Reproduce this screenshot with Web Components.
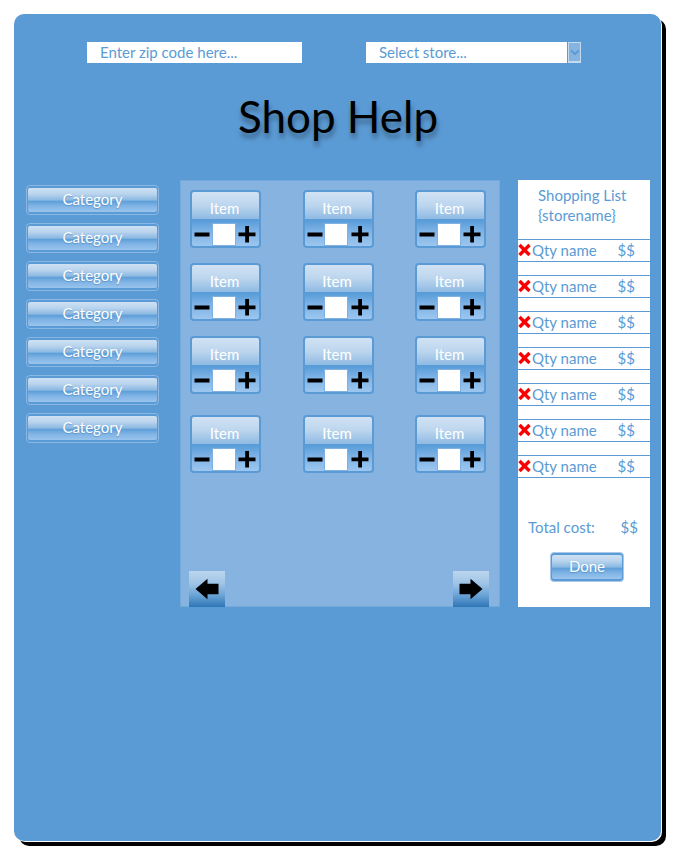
<!DOCTYPE html>
<html lang="en">
<head>
<meta charset="utf-8">
<meta name="viewport" content="width=device-width, initial-scale=1">
<title>Shop Help</title>
<style>
  html { --blue: #5b9bd5; --panel: #86b3e0; --gap: 18px; }
  body { margin: 0; background: #fff; font: 15px/20px Lato, "Open Sans", sans-serif; color: var(--blue); }
</style>
</head>
<body>
<shop-app></shop-app>
<script>
const define = (name, html, init) => {
  const template = document.createElement('template');
  template.innerHTML = `<style>
    *, *::before, *::after { box-sizing: border-box; }
    :host { display: block; box-sizing: border-box; }
    button, input, select { font: inherit; color: inherit; margin: 0; padding: 0; border: 0; border-radius: 0; }
    button { cursor: pointer; }
    svg { display: block; }
  </style>${html}`;
  customElements.define(name, class extends HTMLElement {
    constructor() {
      super();
      this.attachShadow({ mode: 'open' }).append(document.importNode(template.content, true));
      if (init) init(this.shadowRoot);
    }
  });
};

define('glossy-button', `<style>
  button {
    display: block; width: 100%; height: 30px; padding: 2px 1px; border-radius: 4px;
    border: 1px solid #8ab7e3; background: var(--blue); color: #fff; line-height: 22px;
  }
  span {
    display: block; height: 24px; border-radius: 2px;
    text-shadow: 0 1px 1px #5b95cc;
    background: linear-gradient(#cfe1f3, #b9d4ed 25%, #8cb9e2 50%, #5f9fda 56%, #80b4e5 75%, #9ac4ee);
  }
  :host([soft]) button { border-color: #a9caea; }
</style><button type="button"><span><slot></slot></span></button>`);

define('zip-field', `<style>
  input { display: block; width: 100%; height: 21px; padding: 0 13px 2px; background: #fff; outline-offset: 1px; }
  input::placeholder { color: var(--blue); opacity: 1; }
</style><input type="text" aria-label="Zip code" placeholder="Enter zip code here...">`);

define('store-select', `<style>
  :host { display: grid; }
  select, .arrow { grid-area: 1 / 1; }
  select { appearance: none; width: 100%; height: 21px; padding: 0 26px 2px 13px; background: #fff; }
  .arrow {
    justify-self: end; pointer-events: none; width: 13px; height: 21px;
    border: solid #c3daf1; border-width: 1px 1px 2px 1px; background: var(--panel);
    box-shadow: -1px 0 var(--blue); display: grid; place-items: center;
  }
</style>
<select aria-label="Store"><option>Select store...</option></select>
<span class="arrow"><svg width="10" height="7" viewBox="0 0 10 7"><path d="M1 1.5 5 5 9 1.5" fill="none" stroke="#5b9bd5" stroke-width="2"/></svg></span>`);

define('shop-item', `<style>
  :host {
    width: 71px; height: 58px; border: 2px solid var(--blue); border-radius: 4px; color: #fff; text-align: center;
    background: linear-gradient(#d1e2f3, #bdd6ee 24%, #8fbae3 50%, #559ad8 51%, #7db2e5 72%, #9cc6ef);
  }
  .name { padding: 6px 2px 0 0; height: 30px; }
  .row { display: flex; align-items: center; justify-content: space-between; padding: 0 2px; height: 24px; }
  button { background: none; }
  input { width: 24px; height: 23px; background: #fff; border: 1px solid #7fb1e2; color: var(--blue); text-align: center; }
</style>
<div class="name"><slot>Item</slot></div>
<div class="row">
  <button type="button" aria-label="Remove one"><svg width="16" height="18" viewBox="0 0 16 18"><path d="M.5 7.5h15v4H.5z"/></svg></button>
  <input type="text" inputmode="numeric" aria-label="Quantity">
  <button type="button" aria-label="Add one"><svg width="20" height="18" viewBox="0 0 20 18"><path d="M8.2 1H12v6.5h6.5v3.7H12v6.3H8.2v-6.3H1.5V7.5h6.7z"/></svg></button>
</div>`);

define('page-button', `<style>
  button { display: grid; place-items: center; width: 36px; height: 36px; background: linear-gradient(#bdd6ee, #9fc4e6 35%, #6fa6d8 65%, #2e75b6); }
  :host([next]) svg { transform: scaleX(-1); }
</style><button type="button"><svg width="24" height="22" viewBox="0 0 24 22" aria-hidden="true"><path d="M.5 11 12.5.8v5h11v10.4h-11v5z"/></svg></button>`);

define('item-panel', `<style>
  :host { display: flex; flex-direction: column; justify-content: space-between; background: var(--panel); border: 1px solid #74a9dc; padding: 9px 10px 0 9px; }
  .items { display: grid; grid-template-columns: repeat(3, auto); grid-template-rows: repeat(3, 58px) 64px; row-gap: 15px; justify-content: space-between; align-items: end; padding-right: 3px; }
  .pages { display: flex; justify-content: space-between; margin: 0 0 -1px -1px; }
</style><div class="items"></div>
<nav class="pages" aria-label="Pages"><page-button></page-button><page-button next></page-button></nav>`,
  root => {
    root.querySelector('.items').innerHTML = '<shop-item>Item</shop-item>'.repeat(12);
    root.querySelectorAll('page-button').forEach((b, i) =>
      b.shadowRoot.querySelector('button').setAttribute('aria-label', i ? 'Next page' : 'Previous page'));
  });

define('list-row', `<style>
  :host { display: flex; align-items: center; height: 23px; border: solid var(--blue); border-width: 1px 0; padding-bottom: 2px; }
  button { background: none; margin-right: 1px; }
  .name { flex: 1; }
  .price { padding-right: 15px; }
</style>
<button type="button" aria-label="Remove"><svg width="13" height="13" viewBox="0 0 13 13"><path d="M1.5 2 11.5 12M11.5 2 1.5 12" stroke="#fa0000" stroke-width="3.4"/></svg></button>
<span class="name"><slot></slot></span><span class="price"><slot name="price"></slot></span>`);

define('shopping-list', `<style>
  :host { background: #fff; padding-bottom: 25px; }
  h2 { margin: 0; padding: 5px 0 14px 20px; font: inherit; }
  .rows { display: grid; gap: 13px; }
  .total { display: flex; justify-content: space-between; padding: 39px 12px 15px 10px; }
  .done { padding-left: 6px; }
  glossy-button { width: 74px; margin: 0 auto; }
</style>
<h2>Shopping List<br>{storename}</h2>
<div class="rows"></div>
<div class="total"><span>Total cost:</span><span>$$</span></div>
<div class="done"><glossy-button soft>Done</glossy-button></div>`,
  root => {
    root.querySelector('.rows').innerHTML = '<list-row>Qty name<span slot="price">$$</span></list-row>'.repeat(7);
  });

define('category-nav', `<style>
  nav { display: grid; gap: 8px; padding: 5px 3px 0 0; }
</style><nav aria-label="Categories"></nav>`,
  root => { root.querySelector('nav').innerHTML = '<glossy-button>Category</glossy-button>'.repeat(7); });

define('shop-app', `<style>
  :host { display: flex; flex-direction: column; min-height: 100vh; padding: 14px 19px 18px 14px; }
  main { flex: 1; background: var(--blue); border-radius: 10px; padding: 28px 11px 20px 12px; box-shadow: 1px 1px #fff, 5px 5px #000; }
  .search { display: grid; grid-template-columns: 1fr 1fr; gap: 64px; padding: 0 69px 0 61px; }
  h1 { margin: 0; padding: 23px 0 34px; font-size: 44px; line-height: 60px; font-weight: 400; text-align: center; color: #000; text-shadow: 1px 5px 5px rgba(0, 0, 0, .35); }
  .body { display: grid; grid-template-columns: 136fr 320fr 132fr; gap: var(--gap); }
</style>
<main>
  <div class="search"><zip-field></zip-field><store-select></store-select></div>
  <h1>Shop Help</h1>
  <div class="body"><category-nav></category-nav><item-panel></item-panel><shopping-list></shopping-list></div>
</main>`);
</script>
</body>
</html>
